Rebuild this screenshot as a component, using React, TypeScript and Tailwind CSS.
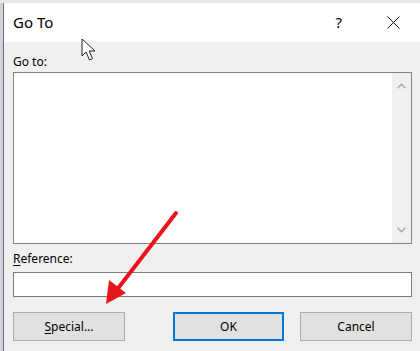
import * as React from 'react'

const font = { fontFamily: '"Segoe UI", "Noto Sans", "Open Sans", sans-serif' }

function Chevron({ up }: { up?: boolean }) {
  return (
    <svg width="9" height="6" viewBox="0 0 9 6" className="text-[#a6a6a6]">
      <path
        d={up ? 'M0.5 5.2 L4.5 1.2 L8.5 5.2' : 'M0.5 0.8 L4.5 4.8 L8.5 0.8'}
        fill="none"
        stroke="currentColor"
        strokeWidth="1.3"
      />
    </svg>
  )
}

function DialogButton({ children, primary }: { children: React.ReactNode; primary?: boolean }) {
  return (
    <button
      className={
        primary
          ? 'h-[29px] w-[111px] border-2 border-[#0078d7] bg-[#e1e1e1] text-[12px] text-black'
          : 'h-[29px] w-[112px] border border-[#adadad] bg-[#e1e1e1] text-[12px] text-black'
      }
    >
      {children}
    </button>
  )
}

export default function App() {
  return (
    <div className="relative flex h-[351px] w-[420px] flex-col overflow-hidden bg-[#d6d6d6]" style={font}>
      <div className="h-[3px] shrink-0 bg-[#e8e8e8]" />
      <div className="flex flex-1">
        <div className="w-[3px] shrink-0 bg-[#cfd3d8]" />
        <div className="flex flex-1 flex-col border-l border-[#6f6f6f]">
          {/* title bar */}
          <div className="flex h-[39px] shrink-0 items-center bg-white pl-[9px]">
            <span className="text-[15px] leading-none text-black">Go To</span>
            <span className="ml-auto mr-[45px] text-[15px] leading-none text-black">?</span>
            <svg width="13" height="13" viewBox="0 0 13 13" className="mr-[20px]">
              <path d="M0.5 0.5 L12.5 12.5 M12.5 0.5 L0.5 12.5" stroke="#111" strokeWidth="1" />
            </svg>
          </div>

          {/* body */}
          <div className="flex flex-1 flex-col bg-[#f0f0f0] pl-[9px] pr-[8px] pt-[12px]">
            <div className="h-[15px] text-[12px] leading-[15px] text-black">Go to:</div>
            <div className="mt-[3px] flex h-[172px] border border-[#828282] bg-white">
              <div className="flex-1" />
              <div className="flex w-[19px] flex-col items-center justify-between bg-[#f0f0f0] py-[10px]">
                <Chevron up />
                <Chevron />
              </div>
            </div>
            <div className="mt-[7px] h-[15px] text-[12px] leading-[15px] text-black">
              <span className="underline underline-offset-2">R</span>eference:
            </div>
            <div className="mt-[6px] h-[25px] border border-[#7a7a7a] bg-white" />
            <div className="mt-[15px] flex items-center">
              <DialogButton>
                <span className="underline underline-offset-2">S</span>pecial...
              </DialogButton>
              <div className="ml-[48px]">
                <DialogButton primary>OK</DialogButton>
              </div>
              <div className="ml-[16px]">
                <DialogButton>Cancel</DialogButton>
              </div>
            </div>
          </div>
        </div>
      </div>

      {/* mouse pointer */}
      <svg className="absolute left-[81px] top-[38px]" width="18" height="25" viewBox="0 0 18 25">
        <path
          d="M1 1 L1 18 L5 14 L8.5 22 L11.5 20.6 L8.2 13 L14 13 Z"
          fill="white"
          stroke="#222"
          strokeWidth="1"
          strokeLinejoin="round"
        />
      </svg>

      {/* red annotation arrow */}
      <svg className="absolute left-0 top-0" width="420" height="351" viewBox="0 0 420 351">
        <line x1="176" y1="213" x2="116" y2="291" stroke="#e8161c" strokeWidth="4" strokeLinecap="round" />
        <path d="M106 304 L109 280 L126 293 Z" fill="#e8161c" />
      </svg>
    </div>
  )
}
